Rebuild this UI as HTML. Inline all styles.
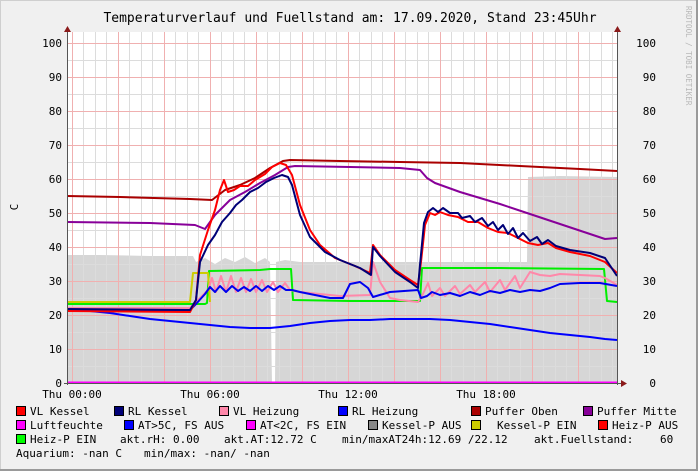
<!DOCTYPE html>
<html><head><meta charset="utf-8"><style>
html,body{margin:0;padding:0;background:#f0f0f0;}
body{width:698px;height:471px;overflow:hidden;position:relative;font-family:"DejaVu Sans Mono","Liberation Mono",monospace;}
svg{position:absolute;left:0;top:0;}
.t{font-family:"DejaVu Sans Mono","Liberation Mono",monospace;font-size:11px;fill:#000;}
</style></head><body>
<svg width="698" height="471" viewBox="0 0 698 471" xmlns="http://www.w3.org/2000/svg">
<rect x="0" y="0" width="698" height="471" fill="#f0f0f0"/>
<rect x="0.5" y="0.5" width="697" height="470" fill="none" stroke="#cfcfcf"/>
<rect x="696" y="0" width="2" height="471" fill="#9a9a9a"/>
<rect x="0" y="469" width="698" height="2" fill="#9a9a9a"/>
<text x="350" y="22" text-anchor="middle" style="font-family:'DejaVu Sans Mono',monospace;font-size:13px">Temperaturverlauf und Fuellstand am: 17.09.2020, Stand 23:45Uhr</text>
<!-- plot bg -->
<rect x="67" y="32" width="550" height="351" fill="#fff"/>
<!-- gray area -->
<path d="M67,383 L67,255 L100,255 L150,256 L193,256 L196,262 L205,258 L215,264 L225,258 L235,262 L245,257 L255,263 L265,258 L270,262 L272,383 L275,383 L276,262 L285,260 L300,262 L350,262 L400,262 L450,262 L500,262 L527,262 L528,177 L560,176 L617,177 L617,383 Z" fill="#d6d6d6"/>
<!-- minor grid -->
<g stroke="#dcdcdc" stroke-width="1">
<path d="M67,366.5H617M67,332.5H617M67,298.5H617M67,264.5H617M67,230.5H617M67,196.5H617M67,162.5H617M67,128.5H617M67,94.5H617M67,60.5H617"/>
<path d="M83.5,32V383M95.5,32V383M106.5,32V383M129.5,32V383M141.5,32V383M152.5,32V383M175.5,32V383M187.5,32V383M198.5,32V383M221.5,32V383M233.5,32V383M244.5,32V383M267.5,32V383M279.5,32V383M290.5,32V383M313.5,32V383M325.5,32V383M336.5,32V383M359.5,32V383M371.5,32V383M382.5,32V383M405.5,32V383M417.5,32V383M428.5,32V383M451.5,32V383M463.5,32V383M474.5,32V383M497.5,32V383M509.5,32V383M520.5,32V383M543.5,32V383M555.5,32V383M566.5,32V383M589.5,32V383M601.5,32V383M612.5,32V383"/>
</g>
<g stroke="#f0b0b0" stroke-width="1">
<path d="M67,349.5H617M67,315.5H617M67,281.5H617M67,247.5H617M67,213.5H617M67,179.5H617M67,145.5H617M67,111.5H617M67,77.5H617M67,43.5H617"/>
<path d="M72.5,32V383M118.5,32V383M164.5,32V383M210.5,32V383M256.5,32V383M302.5,32V383M348.5,32V383M394.5,32V383M440.5,32V383M486.5,32V383M532.5,32V383M578.5,32V383"/>
</g>
<g fill="none" stroke-width="2" stroke-linejoin="round">
<!-- AT outside temp -->
<path stroke="#0000ff" d="M67,310 L90,311 L110,313 L130,316 L150,319 L170,321 L190,323 L210,325 L230,327 L250,328 L270,328 L290,326 L310,323 L330,321 L350,320 L370,320 L390,319 L410,319 L430,319 L450,320 L470,322 L490,324 L510,327 L530,330 L550,333 L570,335 L590,337 L605,339 L617,340"/>
<!-- Puffer Oben -->
<path stroke="#aa0000" d="M67,196 L120,197 L190,199 L212,200 L225,190 L240,185 L255,178 L270,168 L283,161 L290,160 L340,161 L400,162 L460,163 L520,166 L580,169 L617,171"/>
<!-- Puffer Mitte -->
<path stroke="#880099" d="M67,222 L150,223 L195,225 L205,229 L215,215 L230,200 L245,192 L260,183 L275,175 L288,167 L295,166 L350,167 L400,168 L420,170 L427,178 L435,183 L460,192 L500,204 L530,214 L560,224 L590,234 L605,239 L617,238"/>
<!-- green Heiz-P -->
<path stroke="#00ee00" d="M67,304 L195,304 L205,304 L207,303 L209,271 L260,270 L270,269 L291,269 L293,300 L350,301 L420,301 L422,268 L500,268 L604,269 L607,301 L617,302"/>
<!-- yellow Kessel-P -->
<path stroke="#cccc00" d="M67,302 L190,302 L193,273 L208,273 L210,302"/>
<!-- pink VL Heizung -->
<path stroke="#ff88aa" d="M67,308 L190,308 L198,300 L208,290 L212,278 L216,292 L221,276 L226,292 L231,276 L236,292 L241,278 L246,292 L251,279 L256,292 L262,280 L267,292 L273,282 L278,292 L285,283 L290,290 L300,292 L340,296 L370,295 L373,262 L380,282 L390,298 L400,300 L418,302 L422,296 L428,283 L432,296 L440,288 L445,296 L455,286 L460,294 L470,285 L475,292 L485,282 L490,292 L500,280 L505,290 L515,276 L520,288 L530,272 L540,275 L550,276 L560,274 L580,275 L600,276 L605,278 L617,285"/>
<!-- blue RL Heizung -->
<path stroke="#0000ee" d="M67,310 L190,310 L196,304 L205,294 L210,287 L215,292 L220,286 L226,292 L232,286 L238,291 L244,287 L250,291 L256,286 L262,291 L268,286 L274,290 L280,286 L286,290 L292,290 L300,292 L330,298 L343,298 L350,284 L360,282 L368,288 L373,297 L390,292 L418,290 L421,298 L427,296 L432,292 L440,295 L450,293 L460,296 L470,292 L480,295 L490,291 L500,293 L510,290 L520,292 L530,290 L540,291 L550,288 L560,284 L580,283 L600,283 L617,286"/>
<!-- VL Kessel red -->
<path stroke="#ff0000" d="M67,311 L190,312 L196,300 L200,255 L208,230 L215,210 L220,190 L224,180 L228,192 L234,190 L240,186 L248,186 L255,180 L265,174 L272,167 L280,163 L286,165 L292,175 L300,205 L310,230 L320,245 L335,258 L355,266 L370,273 L373,245 L380,255 L395,270 L410,280 L418,285 L421,262 L425,225 L430,213 L435,215 L440,212 L448,215 L458,217 L468,222 L478,222 L488,228 L498,232 L508,233 L518,238 L528,243 L538,245 L548,243 L556,248 L570,252 L590,256 L605,262 L617,273"/>
<!-- RL Kessel navy -->
<path stroke="#000077" d="M67,309 L190,310 L196,300 L200,262 L208,245 L215,235 L222,222 L230,213 L236,205 L242,200 L250,192 L258,188 L266,182 L274,178 L282,175 L288,177 L292,185 L300,215 L310,237 L325,252 L340,260 L360,268 L371,275 L373,247 L380,256 L395,272 L410,282 L418,288 L420,265 L424,223 L428,212 L433,208 L438,212 L443,208 L450,213 L458,213 L462,218 L470,216 L475,222 L482,218 L488,226 L493,222 L498,230 L503,225 L508,234 L513,228 L518,238 L523,233 L530,241 L537,237 L542,244 L548,240 L556,246 L570,250 L590,253 L605,258 L617,276"/>
<!-- magenta 0 line -->
<path stroke="#ff00ff" stroke-width="2" d="M67,382.5 L617,382.5"/>
</g>
<!-- axes -->
<path d="M67.5,30V385M617.5,30V385M64,383.5H622" stroke="#555" stroke-width="1" fill="none"/>
<path d="M64,32 L67.5,26 L71,32Z M614,32 L617.5,26 L621,32Z M621,380 L627,383.5 L621,387Z" fill="#8b1a1a"/>
<!-- Y labels -->
<g class="t" text-anchor="end">
<text x="62" y="47">100</text><text x="62" y="81">90</text><text x="62" y="115">80</text><text x="62" y="149">70</text><text x="62" y="183">60</text><text x="62" y="217">50</text><text x="62" y="251">40</text><text x="62" y="285">30</text><text x="62" y="319">20</text><text x="62" y="353">10</text><text x="62" y="387">0</text>
</g>
<g class="t" text-anchor="end">
<text x="656" y="47">100</text><text x="656" y="81">90</text><text x="656" y="115">80</text><text x="656" y="149">70</text><text x="656" y="183">60</text><text x="656" y="217">50</text><text x="656" y="251">40</text><text x="656" y="285">30</text><text x="656" y="319">20</text><text x="656" y="353">10</text><text x="656" y="387">0</text>
</g>
<text class="t" transform="translate(18,207) rotate(-90)" text-anchor="middle">C</text>
<text transform="translate(686,6) rotate(90)" style="font-family:'DejaVu Sans Mono',monospace;font-size:7.5px;fill:#b8b8b8">RRDTOOL / TOBI OETIKER</text>
<!-- X labels -->
<g class="t" text-anchor="middle">
<text x="72" y="398">Thu 00:00</text><text x="210" y="398">Thu 06:00</text><text x="348" y="398">Thu 12:00</text><text x="486" y="398">Thu 18:00</text>
</g>
<!-- legend -->
<g stroke="#000" stroke-width="1">
<rect x="16.5" y="406.5" width="9" height="9" fill="#ff0000"/>
<rect x="114.5" y="406.5" width="9" height="9" fill="#000077"/>
<rect x="219.5" y="406.5" width="9" height="9" fill="#ff88aa"/>
<rect x="338.5" y="406.5" width="9" height="9" fill="#0000ff"/>
<rect x="471.5" y="406.5" width="9" height="9" fill="#aa0000"/>
<rect x="583.5" y="406.5" width="9" height="9" fill="#880099"/>
<rect x="16.5" y="420.5" width="9" height="9" fill="#ff00ff"/>
<rect x="124.5" y="420.5" width="9" height="9" fill="#0000ff"/>
<rect x="246.5" y="420.5" width="9" height="9" fill="#ff00ff"/>
<rect x="368.5" y="420.5" width="9" height="9" fill="#888888"/>
<rect x="471.5" y="420.5" width="9" height="9" fill="#cccc00"/>
<rect x="598.5" y="420.5" width="9" height="9" fill="#ff0000"/>
<rect x="16.5" y="434.5" width="9" height="9" fill="#00ff00"/>
</g>
<g class="t">
<text x="30" y="415">VL Kessel</text>
<text x="128" y="415">RL Kessel</text>
<text x="233" y="415">VL Heizung</text>
<text x="352" y="415">RL Heizung</text>
<text x="485" y="415">Puffer Oben</text>
<text x="597" y="415">Puffer Mitte</text>
<text x="30" y="429">Luftfeuchte</text>
<text x="138" y="429">AT&gt;5C, FS AUS</text>
<text x="260" y="429">AT&lt;2C, FS EIN</text>
<text x="382" y="429">Kessel-P AUS</text>
<text x="497" y="429">Kessel-P EIN</text>
<text x="612" y="429">Heiz-P AUS</text>
<text x="30" y="443">Heiz-P EIN</text>
<text x="120" y="443">akt.rH: 0.00</text>
<text x="224" y="443">akt.AT:12.72 C</text>
<text x="342" y="443">min/maxAT24h:12.69 /22.12</text>
<text x="534" y="443">akt.Fuellstand:</text>
<text x="660" y="443">60</text>
<text x="16" y="457">Aquarium: -nan C</text>
<text x="144" y="457">min/max: -nan/ -nan</text>
</g>
</svg>
</body></html>
